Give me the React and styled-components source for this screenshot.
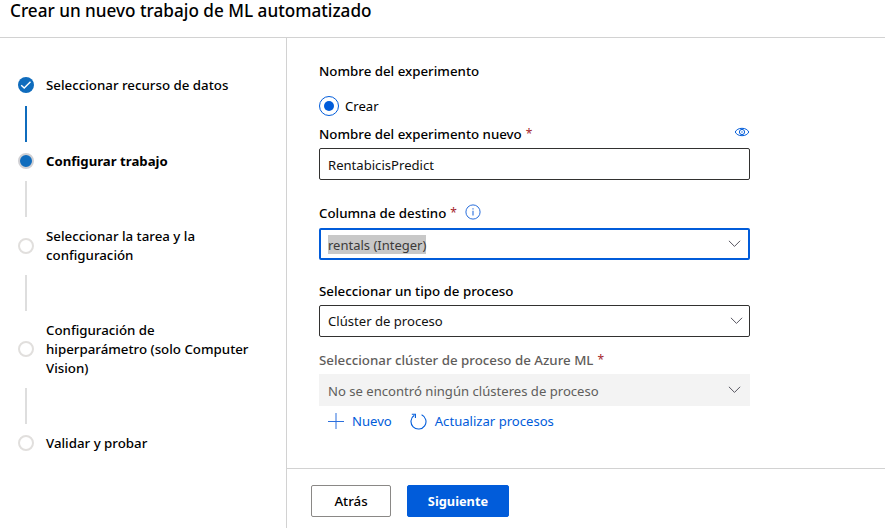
import React from "react";
import styled, { createGlobalStyle } from "styled-components";

const GlobalStyle = createGlobalStyle`
  * { box-sizing: border-box; }
  body {
    margin: 0;
    background: #fff;
    color: #000;
    font-family: "Noto Sans", "Open Sans", sans-serif;
    font-size: 13.1px;
    overflow: hidden;
  }
`;

const Page = styled.div`
  display: flex;
  flex-direction: column;
  height: 528px;
`;

const Header = styled.header`
  height: 38px;
  flex: none;
  padding-left: 10px;
  border-bottom: 1px solid #d2d2d2;
`;

const Title = styled.h1`
  margin: 0;
  font-size: 17.15px;
  font-weight: 500;
  line-height: 22px;
`;

const Body = styled.div`
  display: flex;
  flex: 1;
  min-height: 0;
`;

const Sidebar = styled.nav`
  width: 287px;
  flex: none;
  padding: 37px 20px 0 18px;
  border-right: 1px solid #d2d2d2;
`;

const Step = styled.div`
  display: flex;
  align-items: center;
  gap: 12px;
  min-height: ${(p) => (p.$status === "done" ? 21 : 19)}px;
`;

const StepMarker = styled.span`
  display: flex;
  align-items: center;
  justify-content: center;
  width: 16px;
  height: 16px;
  flex: none;
  margin-bottom: 1px;
  border-radius: 50%;
  border: ${(p) => (p.$status === "done" ? "0" : "2px solid")};
  border-color: ${(p) => (p.$status === "current" ? "#d0d0d4" : "#e1dfdd")};
  background: ${(p) => (p.$status === "pending" ? "#fff" : "#0f6cbd")};
`;

const StepLabel = styled.span`
  font-size: ${(p) => (p.$status === "current" ? 13.2 : 13.3)}px;
  font-weight: ${(p) => (p.$status === "current" ? 700 : 500)};
  line-height: 19px;
  white-space: pre-line;
`;

const Connector = styled.div`
  width: 2px;
  height: 36px;
  margin: 10px 0 10px 7px;
  background: ${(p) => (p.$done ? "#0f6cbd" : "#dedede")};
`;

const Main = styled.main`
  display: flex;
  flex-direction: column;
  flex: 1;
`;

const Form = styled.form`
  flex: 1;
  width: 463px;
  padding: 23px 0 0 32px;
`;

const SectionTitle = styled.div`
  font-size: 13.3px;
  font-weight: 500;
  line-height: 20px;
`;

const RadioRow = styled.label`
  display: flex;
  align-items: center;
  gap: 6px;
  height: 20px;
  margin-top: 15px;
`;

const RadioCircle = styled.span`
  display: flex;
  align-items: center;
  justify-content: center;
  width: 20px;
  height: 20px;
  border: 1px solid #015cda;
  border-radius: 50%;

  &::after {
    content: "";
    width: 10px;
    height: 10px;
    border-radius: 50%;
    background: #015cda;
  }
`;

const Field = styled.div`
  margin-top: ${(p) => p.$top}px;
`;

const FieldLabel = styled.div`
  display: flex;
  align-items: center;
  height: 20px;
  margin-bottom: ${(p) => p.$gap ?? 4}px;
  font-size: 13.3px;
  font-weight: 500;
  line-height: 20px;
  color: ${(p) => (p.$disabled ? "#5f5d5b" : "#000")};
`;

const Required = styled.span`
  margin-left: 4px;
  font-size: 12px;
  font-weight: 400;
  color: #a4262c;
`;

const InfoSlot = styled.span`
  display: flex;
  margin: -3px 0 0 8px;
`;

const EyeSlot = styled.span`
  display: flex;
  margin: -5px 0 0 auto;
`;

const Control = styled.div`
  display: flex;
  align-items: center;
  justify-content: space-between;
  height: 32px;
  padding: 0 ${(p) => (p.$focused ? 7 : p.$disabled ? 9 : 6)}px 0 ${(p) => (p.$focused ? 7 : p.$disabled ? 9 : 8)}px;
  border-style: solid;
  border-width: ${(p) => (p.$disabled ? 0 : p.$focused ? 2 : 1)}px;
  border-color: ${(p) => (p.$focused ? "#015cda" : "#323130")};
  border-radius: ${(p) => (p.$disabled ? 0 : 2)}px;
  background: ${(p) => (p.$disabled ? "#f3f3f3" : "#fff")};
  color: ${(p) => (p.$disabled ? "#605e5c" : "#111")};
`;

const Value = styled.span`
  line-height: 19px;
  padding-top: ${(p) => (p.$low ? 2 : 0)}px;
`;

const Selected = styled.span`
  height: 19px;
  margin-top: 1px;
  line-height: 20px;
  font-size: 13px;
  background: #c8c8c8;
  color: #3b3a39;
`;

const Links = styled.div`
  display: flex;
  gap: 18px;
  margin-top: 5px;
  padding-left: 9px;
`;

const Link = styled.a`
  display: flex;
  align-items: center;
  gap: 8px;
  height: 20px;
  color: #015cda;
`;

const Footer = styled.footer`
  display: flex;
  gap: 16px;
  height: 60px;
  flex: none;
  padding: 16px 0 0 24px;
  border-top: 1px solid #d2d2d2;
`;

const Button = styled.button`
  width: ${(p) => (p.$primary ? 102 : 80)}px;
  height: 32px;
  padding: 0;
  border: 1px solid ${(p) => (p.$primary ? "#015cda" : "#8a8886")};
  border-radius: 2px;
  background: ${(p) => (p.$primary ? "#015cda" : "#fff")};
  color: ${(p) => (p.$primary ? "#fff" : "#000")};
  font-family: inherit;
  font-size: ${(p) => (p.$primary ? 12.8 : 13.3)}px;
  font-weight: ${(p) => (p.$primary ? 700 : 500)};
`;

const CheckIcon = () => (
  <svg width="16" height="16" viewBox="0 0 16 16" fill="none" stroke="#fff" strokeWidth="1.4">
    <path d="M3.2 8.2 6.2 11 12.5 4.800" />
  </svg>
);

const ChevronIcon = () => (
  <svg width="13" height="8" viewBox="0 0 13 8" fill="none" stroke="#56545f" strokeWidth="1">
    <path d="M.9.8 6.5 6.400 12.1.8" />
  </svg>
);

const InfoIcon = () => (
  <svg width="16" height="16" viewBox="0 0 16 16" fill="none" stroke="#2a6fdc">
    <circle cx="8" cy="8" r="7.1" strokeWidth="1" />
    <path d="M8 6.8V11.5M8 4.2V5.4" strokeWidth="1.1" />
  </svg>
);

const EyeIcon = () => (
  <svg width="16" height="10" viewBox="0 0 16 10" fill="none" stroke="#015cda" strokeWidth="1">
    <path d="M1.200 5C2.400 2.600 4.800 1.300 8 1.300s5.600 1.300 6.800 3.700C13.600 7.400 11.200 8.700 8 8.700S2.400 7.400 1.200 5Z" />
    <circle cx="8" cy="5" r="2.600" />
    <circle cx="8" cy="5" r=".7" fill="#015cda" stroke="none" />
  </svg>
);

const PlusIcon = () => (
  <svg width="16" height="16" viewBox="0 0 16 16" fill="none" stroke="#2b6fdd" strokeWidth="1">
    <path d="M0 8.500H16M8 0V16" />
  </svg>
);

const RefreshIcon = () => (
  <svg width="17" height="17" viewBox="0 0 17 17" fill="none" stroke="#015cda" strokeWidth="1.1">
    <path d="M11.600 1.700A7.500 7.500 0 1 1 4.300 2.300" />
    <path d="M1.800 1.300H5.400V4.900" />
  </svg>
);

const STEPS = [
  { label: "Seleccionar recurso de datos", status: "done" },
  { label: "Configurar trabajo", status: "current" },
  { label: "Seleccionar la tarea y la\nconfiguración", status: "pending" },
  { label: "Configuración de\nhiperparámetro (solo Computer\nVision)", status: "pending" },
  { label: "Validar y probar", status: "pending" },
];

export default function App() {
  return (
    <Page>
      <GlobalStyle />
      <Header>
        <Title>Crear un nuevo trabajo de ML automatizado</Title>
      </Header>
      <Body>
        <Sidebar>
          {STEPS.map((step, i) => (
            <React.Fragment key={step.label}>
              {i > 0 && <Connector $done={STEPS[i - 1].status === "done"} />}
              <Step $status={step.status}>
                <StepMarker $status={step.status}>{step.status === "done" && <CheckIcon />}</StepMarker>
                <StepLabel $status={step.status}>{step.label}</StepLabel>
              </Step>
            </React.Fragment>
          ))}
        </Sidebar>
        <Main>
          <Form>
            <SectionTitle>Nombre del experimento</SectionTitle>
            <RadioRow>
              <RadioCircle />
              Crear
            </RadioRow>
            <Field $top={8}>
              <FieldLabel>
                Nombre del experimento nuevo<Required>*</Required>
                <EyeSlot><EyeIcon /></EyeSlot>
              </FieldLabel>
              <Control><Value $low>RentabicisPredict</Value></Control>
            </Field>
            <Field $top={23}>
              <FieldLabel $gap={5}>
                Columna de destino<Required>*</Required>
                <InfoSlot><InfoIcon /></InfoSlot>
              </FieldLabel>
              <Control $focused>
                <Selected>rentals (Integer)</Selected>
                <ChevronIcon />
              </Control>
            </Field>
            <Field $top={21}>
              <FieldLabel>Seleccionar un tipo de proceso</FieldLabel>
              <Control>
                <Value>Clúster de proceso</Value>
                <ChevronIcon />
              </Control>
            </Field>
            <Field $top={13}>
              <FieldLabel $disabled>
                Seleccionar clúster de proceso de Azure ML<Required>*</Required>
              </FieldLabel>
              <Control $disabled>
                <Value $low>No se encontró ningún clústeres de proceso</Value>
                <ChevronIcon />
              </Control>
            </Field>
            <Links>
              <Link><PlusIcon />Nuevo</Link>
              <Link><RefreshIcon />Actualizar procesos</Link>
            </Links>
          </Form>
          <Footer>
            <Button type="button">Atrás</Button>
            <Button type="button" $primary>Siguiente</Button>
          </Footer>
        </Main>
      </Body>
    </Page>
  );
}
